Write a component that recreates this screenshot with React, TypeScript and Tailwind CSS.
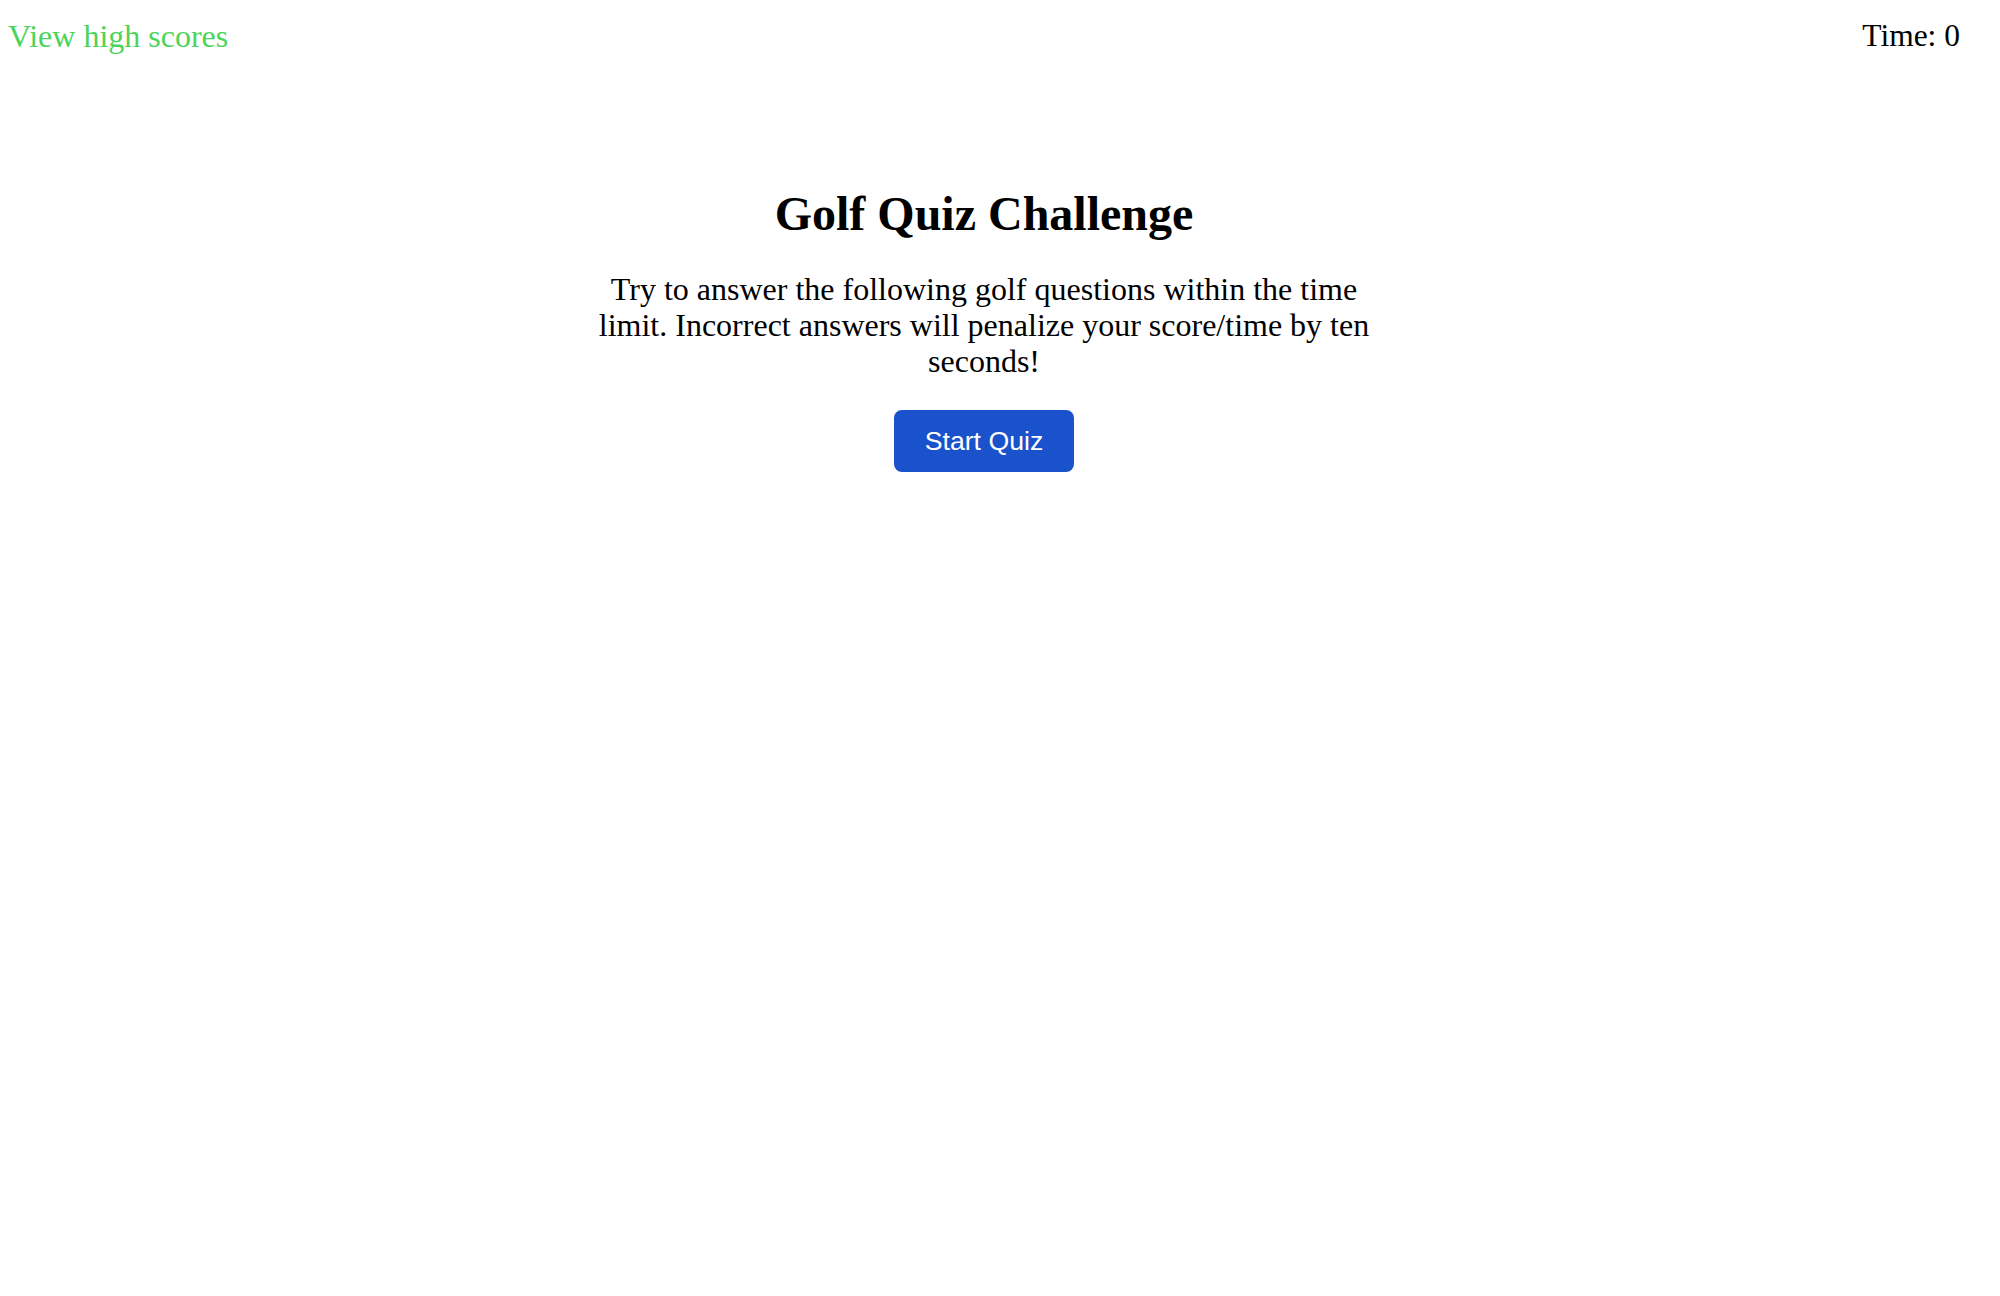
export default function App() {
  return (
    <div className="min-h-[1296px] w-[1968px] bg-white font-['Liberation_Serif',serif] text-black">
      <header className="flex items-start justify-between pl-2 pr-[8px] pt-[18px]">
        <a href="#" className="text-[32px] leading-[1.15] text-[#4cd45a]">
          View high scores
        </a>
        <div className="text-[31.5px] leading-[1.15]">Time: 0</div>
      </header>

      <main className="mx-auto mt-[131px] flex w-[800px] flex-col items-center text-center">
        <h1 className="text-[48px] font-bold leading-[1.15]">
          Golf Quiz Challenge
        </h1>
        <p className="mt-[31px] text-[32px] leading-[1.12]">
          Try to answer the following golf questions within the time limit.
          Incorrect answers will penalize your score/time by ten seconds!
        </p>
        <button
          type="button"
          className="mt-[31px] h-[62px] w-[180px] rounded-lg bg-[#1a52cc] font-['Liberation_Sans',sans-serif] text-[26.67px] text-white"
        >
          Start Quiz
        </button>
      </main>
    </div>
  );
}
